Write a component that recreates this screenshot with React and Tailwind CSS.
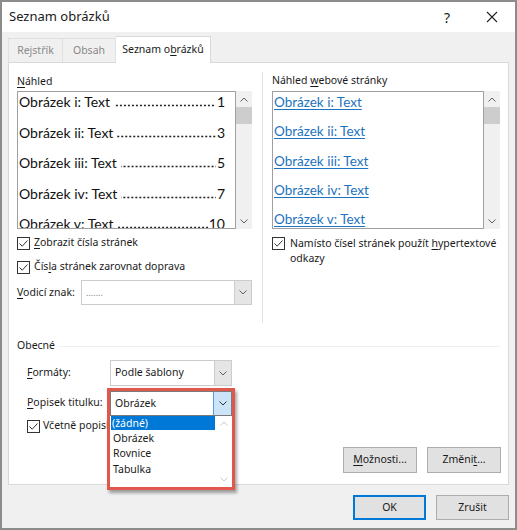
import React from "react";

const ui = { fontFamily: '"Noto Sans", "Open Sans", sans-serif' };
const doc = { fontFamily: 'Lato, "Liberation Sans", sans-serif' };

const Chevron = ({ up = false, color = "#606060" }) => (
    <svg width="8" height="5" viewBox="0 0 8 5" className="block">
        <polyline
            points={up ? "0.5,4.5 4,1 7.5,4.5" : "0.5,0.5 4,4 7.5,0.5"}
            fill="none"
            stroke={color}
            strokeWidth="1"
        />
    </svg>
);

const Checkbox = () => (
    <div className="w-[13px] h-[13px] border border-[#333] bg-white flex items-center justify-center shrink-0">
        <svg width="11" height="11" viewBox="0 0 11 11">
            <polyline
                points="1.5,5.5 4.2,8.2 9.5,2.5"
                fill="none"
                stroke="#333"
                strokeWidth="1"
            />
        </svg>
    </div>
);

// vertical scrollbar used by the preview lists
const ScrollTrack = ({ h }) => (
    <div className={`w-[16px] bg-[#f0f0f0] flex flex-col items-center ${h}`}>
        <div className="h-[16px] flex items-center justify-center">
            <Chevron up />
        </div>
        <div className="w-full h-[17px] bg-[#cdcdcd]" />
        <div className="flex-1" />
        <div className="h-[16px] flex items-center justify-center">
            <Chevron />
        </div>
    </div>
);

const U = ({ children }) => <span className="underline underline-offset-2">{children}</span>;

const previewRows = [
    ["Obrázek i: Text", "1"],
    ["Obrázek ii: Text", "3"],
    ["Obrázek iii: Text", "5"],
    ["Obrázek iv: Text", "7"],
    ["Obrázek v: Text", "10"],
];

const webRows = [
    "Obrázek i: Text",
    "Obrázek ii: Text",
    "Obrázek iii: Text",
    "Obrázek iv: Text",
    "Obrázek v: Text",
];

const Combo = ({ value, muted = false }) => (
    <div className="flex h-full border border-[#cccccc] bg-white">
        <div
            className={`flex-1 flex items-center pl-[4px] ${muted ? "text-[#888] text-[9px]" : "text-[#1a1a1a]"}`}
        >
            {value}
        </div>
        <div className="w-[17px] bg-[#e5e5e5] border-l border-[#cccccc] flex items-center justify-center">
            <Chevron />
        </div>
    </div>
);

const Button = ({ children, focused = false, w = "w-[74px]", h = "h-[26px]" }) => (
    <div
        className={`${w} ${h} bg-[#e1e1e1] flex items-center justify-center text-[#1a1a1a] ${focused ? "border-2 border-[#0078d7]" : "border border-[#adadad]"}`}
    >
        {children}
    </div>
);

export default function App() {
    return (
        <div
            className="w-[517px] h-[530px] border-2 border-[#8c8c8c] bg-[#f0f0f0] flex flex-col text-[10.5px] text-[#1a1a1a]"
            style={ui}
        >
            {/* title bar */}
            <div className="h-[30px] bg-white flex items-center pl-[7px] shrink-0">
                <span className="text-[13px] flex-1">Seznam obrázků</span>
                <span className="text-[14px] w-[12px] mr-[33px] text-center">?</span>
                <svg width="12" height="12" viewBox="0 0 12 12" className="mr-[17px]">
                    <path d="M1 1 L11 11 M11 1 L1 11" stroke="#222" strokeWidth="1.1" />
                </svg>
            </div>

            {/* tabs */}
            <div className="h-[30px] flex items-end pl-[6px] shrink-0">
                <div className="w-[54px] h-[24px] border border-[#e0e0e0] border-b-0 border-r-0 flex items-center justify-center text-[#8a8a8a]">
                    Rejstřík
                </div>
                <div className="w-[54px] h-[24px] border border-[#e0e0e0] border-b-0 flex items-center justify-center text-[#8a8a8a]">
                    Obsah
                </div>
                <div className="w-[95px] h-[27px] -mb-px relative z-10 bg-white border border-[#d9d9d9] border-b-0 border-l-0 flex items-center justify-center">
                    Seznam o<U>b</U>rázků
                </div>
            </div>

            {/* tab page */}
            <div className="relative mx-[6px] w-[501px] h-[423px] border border-[#d9d9d9] bg-white shrink-0">
                <div className="flex h-[262px]">
                    {/* print preview */}
                    <div className="w-[253px] pl-[8px] pt-[10px]">
                        <div className="h-[16px] leading-[16px]">
                            <U>N</U>áhled
                        </div>
                        <div className="flex mt-[2px]">
                            <div
                                className="w-[219px] h-[138px] border border-[#a0a0a0] overflow-hidden pl-[1px] pr-[10px] text-[14px] text-[#111]"
                                style={doc}
                            >
                                {previewRows.map(([label, page], i) => (
                                    <div key={i} className="flex items-start h-[30.5px] leading-[20px] whitespace-nowrap">
                                        <span>{label}</span>
                                        {/* dot leader */}
                                        <span className="flex-1 h-[15px] ml-[4px] mr-[1px] bg-[radial-gradient(circle,#222_0.9px,transparent_1.2px)] bg-[length:4px_3px] bg-repeat-x bg-bottom" />
                                        <span>{page}</span>
                                    </div>
                                ))}
                            </div>
                            <ScrollTrack h="h-[138px]" />
                        </div>
                        <div className="flex items-center gap-[4px] mt-[6px] h-[16px]">
                            <Checkbox />
                            <span>
                                <U>Z</U>obrazit čísla stránek
                            </span>
                        </div>
                        <div className="flex items-center gap-[4px] mt-[8px] h-[16px]">
                            <Checkbox />
                            <span>
                                Čís<U>l</U>a stránek zarovnat doprava
                            </span>
                        </div>
                        <div className="flex items-center mt-[5px] h-[25px]">
                            <span className="w-[64px]">
                                <U>V</U>odicí znak:
                            </span>
                            <div className="w-[171px] h-full">
                                <Combo value="......." muted />
                            </div>
                        </div>
                    </div>

                    {/* web preview */}
                    <div className="mt-[9px] h-[251px] border-l border-[#e3e3e3] pl-[9px]">
                        <div className="h-[16px] leading-[16px]">
                            Náhled <U>w</U>ebové stránky
                        </div>
                        <div className="flex mt-[3px]">
                            <div
                                className="w-[212px] h-[138px] border border-[#a0a0a0] overflow-hidden pl-[1px] text-[13.5px] text-[#1e73be]"
                                style={doc}
                            >
                                {webRows.map((label) => (
                                    <div key={label} className="h-[29.3px] leading-[20px] whitespace-nowrap">
                                        <span className="underline underline-offset-2">{label}</span>
                                    </div>
                                ))}
                            </div>
                            <ScrollTrack h="h-[138px]" />
                        </div>
                        <div className="flex gap-[5px] mt-[8px]">
                            <Checkbox />
                            <div className="leading-[15px] -mt-[1px]">
                                <div>
                                    Namísto čísel stránek použít <U>h</U>ypertextové
                                </div>
                                <div>odkazy</div>
                            </div>
                        </div>
                    </div>
                </div>

                {/* general options */}
                <div className="pl-[8px] mt-[13px] flex items-center h-[16px]">
                    <span>Obecné</span>
                    <div className="flex-1 h-px bg-[#f0f0f0] ml-[3px] mr-[8px]" />
                </div>
                <div className="pl-[18px]">
                    <div className="flex items-center mt-[6px] h-[26px]">
                        <span className="w-[83px]">
                            <U>F</U>ormáty:
                        </span>
                        <div className="w-[122px] h-full">
                            <Combo value="Podle šablony" />
                        </div>
                    </div>
                    <div className="flex items-center mt-[4px] h-[25px]">
                        <span className="w-[83px]">
                            <U>P</U>opisek titulku:
                        </span>
                        <div className="relative w-[122px] h-full">
                            {/* open caption list, outlined */}
                            <div className="absolute -left-[3px] -top-[2px] w-[128px] h-[102px] border-[3px] border-[#e0574c] bg-white z-20 flex flex-col shadow-[2px_3px_3px_rgba(0,0,0,0.35)]">
                                <div className="flex h-[25px] border border-[#7a7a7a] shrink-0">
                                    <div className="flex-1 flex items-center pl-[4px]">Obrázek</div>
                                    <div className="w-[18px] bg-[#cce4f7] border-l border-[#569de5] flex items-center justify-center">
                                        <Chevron color="#333" />
                                    </div>
                                </div>
                                <div className="flex flex-1">
                                    <div className="flex-1 pl-[1px]">
                                        <div className="h-[14px] leading-[14px] bg-[#0078d7] text-white pl-[1px]">
                                            (žádné)
                                        </div>
                                        {["Obrázek", "Rovnice", "Tabulka"].map((item) => (
                                            <div key={item} className="h-[15px] leading-[15px] pl-[2px] mt-[0.5px]">
                                                {item}
                                            </div>
                                        ))}
                                    </div>
                                    <div className="w-[17px] flex flex-col items-center justify-between py-[5px]">
                                        <Chevron up color="#c8c8c8" />
                                        <Chevron color="#c8c8c8" />
                                    </div>
                                </div>
                            </div>
                        </div>
                    </div>
                    <div className="flex items-center gap-[3px] mt-[4px] h-[14px] whitespace-nowrap">
                        <Checkbox />
                        <span>Včetně popisku a čísla</span>
                    </div>
                </div>
                <div className="flex justify-end gap-[10px] pr-[7px] mt-[14px]">
                    <Button>
                        <span>
                            <U>M</U>ožnosti...
                        </span>
                    </Button>
                    <Button>
                        <span>
                            Změni<U>t</U>...
                        </span>
                    </Button>
                </div>
            </div>

            {/* dialog buttons */}
            <div className="flex justify-end gap-[10px] pr-[6px] mt-[10px]">
                <Button focused w="w-[73px]" h="h-[25px]">OK</Button>
                <Button w="w-[73px]" h="h-[25px]">Zrušit</Button>
            </div>
        </div>
    );
}
